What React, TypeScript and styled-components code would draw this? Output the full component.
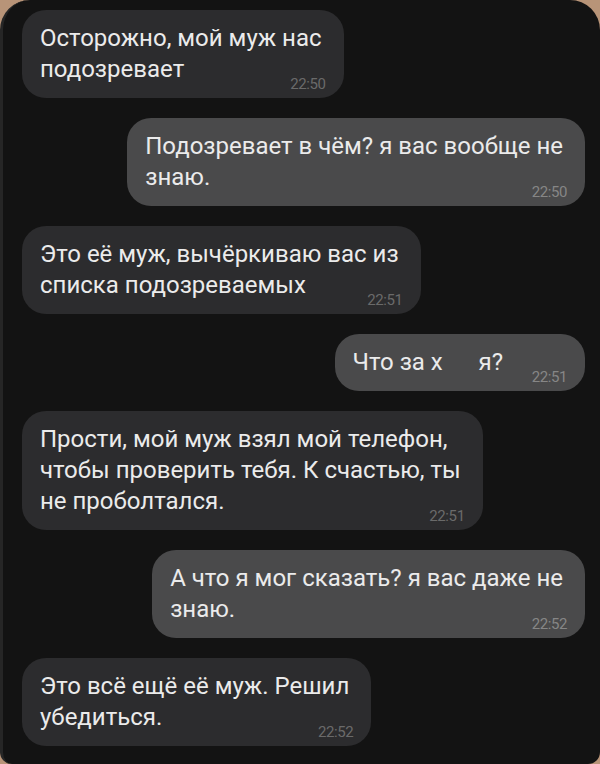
import React from "react"
import styled, { createGlobalStyle } from "styled-components"

interface Message {
  id: number
  out: boolean
  lines: string[]
  time: string
}

const messages: Message[] = [
  { id: 1, out: false, lines: ["Осторожно, мой муж нас", "подозревает"], time: "22:50" },
  { id: 2, out: true, lines: ["Подозревает в чём? я вас вообще не", "знаю."], time: "22:50" },
  { id: 3, out: false, lines: ["Это её муж, вычёркиваю вас из", "списка подозреваемых"], time: "22:51" },
  { id: 4, out: true, lines: ["Что за х\u00a0\u00a0\u00a0\u00a0\u00a0\u00a0я?"], time: "22:51" },
  {
    id: 5,
    out: false,
    lines: ["Прости, мой муж взял мой телефон,", "чтобы проверить тебя. К счастью, ты", "не проболтался."],
    time: "22:51",
  },
  { id: 6, out: true, lines: ["А что я мог сказать? я вас даже не", "знаю."], time: "22:52" },
  { id: 7, out: false, lines: ["Это всё ещё её муж. Решил", "убедиться."], time: "22:52" },
]

const GlobalStyle = createGlobalStyle`
  html, body {
    margin: 0;
    padding: 0;
    background: #b89478;
  }
  body {
    font-family: Roboto, "Noto Sans", sans-serif;
  }
`

const ChatBubble: React.FC<{ message: Message }> = ({ message }) => (
  <S.Row out={message.out}>
    <S.Bubble out={message.out}>
      {message.lines.map((line, i) => (
        <S.Line key={i}>
          {line}
          {i === message.lines.length - 1 && <S.TimeSpacer />}
        </S.Line>
      ))}
      <S.Time out={message.out}>{message.time}</S.Time>
    </S.Bubble>
  </S.Row>
)

export default function App() {
  return (
    <>
      <GlobalStyle />
      <S.Screen>
        {messages.map((m) => (
          <ChatBubble key={m.id} message={m} />
        ))}
      </S.Screen>
    </>
  )
}

const S = {
  Screen: styled.div`
    box-sizing: border-box;
    width: 600px;
    height: 764px;
    background: #131313;
    border-radius: 30px 30px 12px 12px;
    border-left: 3px solid #262626;
    display: flex;
    flex-direction: column;
    gap: 20px;
    padding: 10px 15px 0 19px;
    overflow: hidden;
  `,
  Row: styled.div<{ out: boolean }>`
    display: flex;
    justify-content: ${(p) => (p.out ? "flex-end" : "flex-start")};
  `,
  Bubble: styled.div<{ out: boolean }>`
    position: relative;
    background: ${(p) => (p.out ? "#4a4a4b" : "#2c2c2e")};
    color: #ebebeb;
    border-radius: 24px;
    padding: 13px 22px 13px 18px;
    font-size: 24px;
    line-height: 31px;
  `,
  Line: styled.div`
    white-space: nowrap;
  `,
  TimeSpacer: styled.span`
    display: inline-block;
    width: 60px;
  `,
  Time: styled.span<{ out: boolean }>`
    position: absolute;
    right: 18px;
    bottom: 5px;
    font-size: 15px;
    line-height: 17px;
    letter-spacing: -0.4px;
    color: ${(p) => (p.out ? "#868686" : "#6a6a6a")};
  `,
}
